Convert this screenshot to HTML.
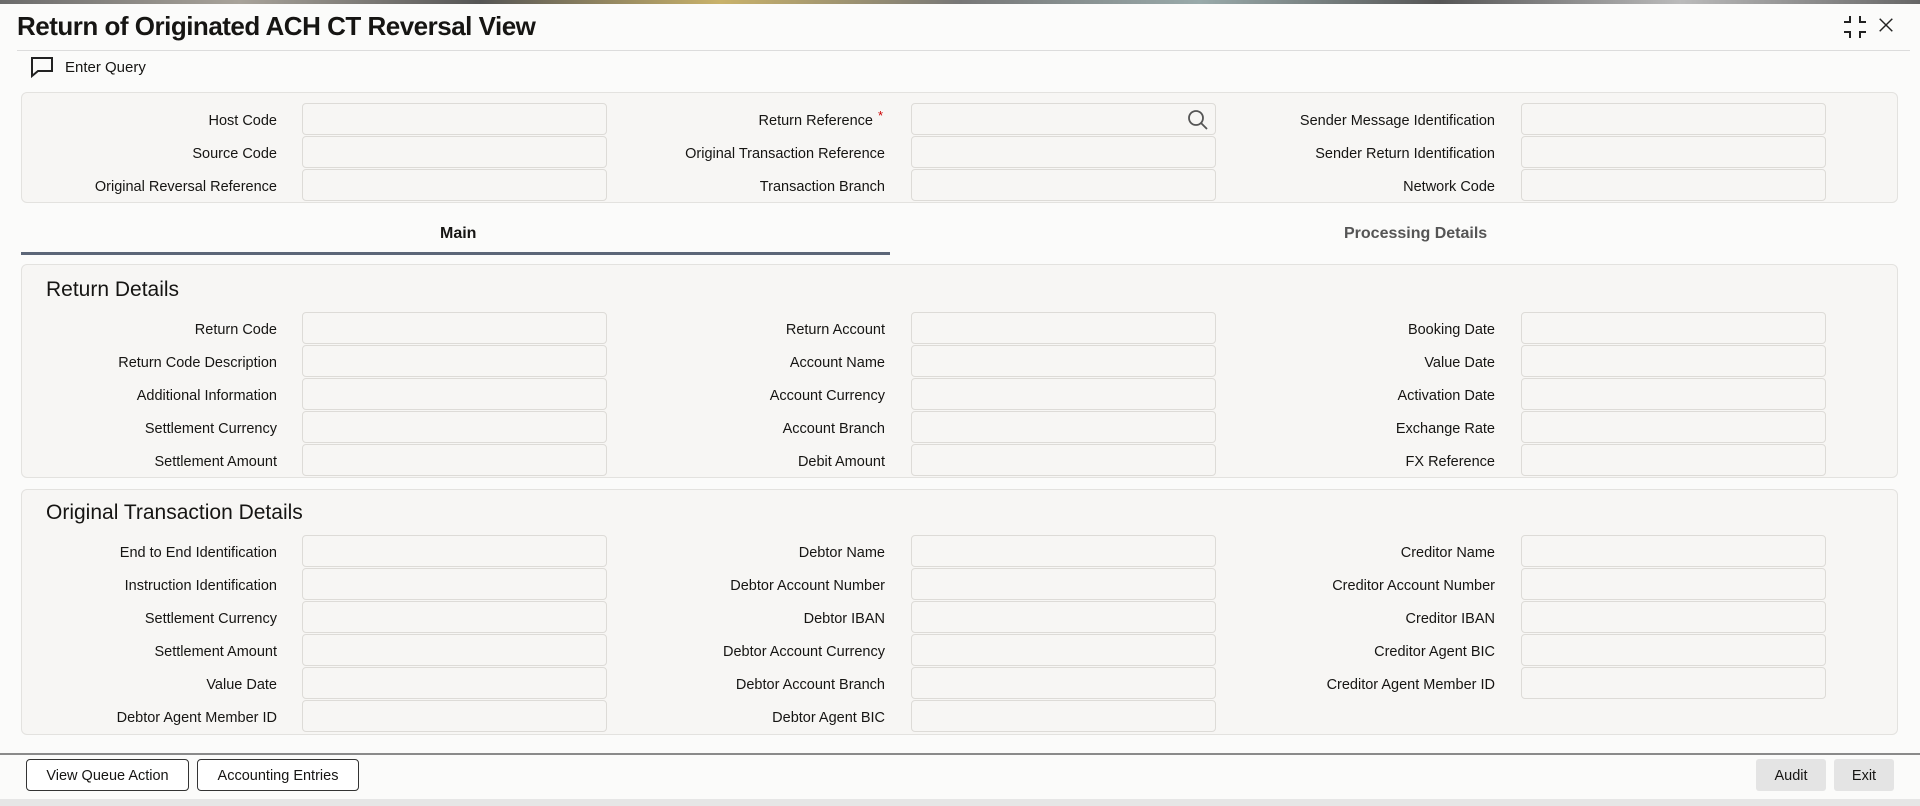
<!DOCTYPE html>
<html><head><meta charset="utf-8"><style>
*{box-sizing:border-box;margin:0;padding:0}
body{width:1920px;height:806px;overflow:hidden;background:#fbfbfa;font-family:"Liberation Sans",sans-serif;color:#161513;position:relative}
.top{position:absolute;left:0;top:0;width:1920px;height:4px;background:linear-gradient(90deg,#6b6b6b,#a8a39a,#555,#c9b26a,#777,#9aa,#555,#bbb,#666)}
.title{position:absolute;left:17px;top:11px;font-size:26px;font-weight:bold;letter-spacing:-0.5px}
.sep{position:absolute;left:17px;top:50px;width:1893px;height:1px;background:#dcdcdc}
.eq{position:absolute;left:65px;top:59px;font-size:15px}
.panel{position:absolute;left:21px;width:1877px;background:#f7f6f4;border:1px solid #e3e2df;border-radius:6px}
.lbl{position:absolute;font-size:14.5px;text-align:right;width:270px;line-height:32px;padding-top:2px}
.inp{position:absolute;width:305px;height:32px;border:1px solid #dddbd7;border-radius:4px;background:#f7f6f4}
.h2{position:absolute;left:46px;font-size:21px}
.tab{position:absolute;top:225px;font-size:16px;font-weight:bold}
.btn{position:absolute;top:759px;height:32px;border:1px solid #333;border-radius:4px;font-size:14.5px;line-height:32px;text-align:center;background:#fff}
.gbtn{position:absolute;top:759px;height:32px;background:#e4e4e4;border-radius:3px;font-size:14.5px;line-height:34px;text-align:center}
</style></head><body>
<div class="top"></div>
<div class="title">Return of Originated ACH CT Reversal View</div>
<svg style="position:absolute;left:1842px;top:14px" width="26" height="26" viewBox="0 0 26 26" fill="none" stroke="#222" stroke-width="2"><path d="M8 2v6H2M18 2v6h6M8 24v-6H2M18 24v-6h6"/></svg>
<svg style="position:absolute;left:1877px;top:16px" width="18" height="18" viewBox="0 0 20 20" stroke="#222" stroke-width="1.6"><path d="M3 3l14 14M17 3L3 17"/></svg>
<div class="sep"></div>
<svg style="position:absolute;left:30px;top:56px" width="24" height="22" viewBox="0 0 24 22" fill="none" stroke="#222" stroke-width="2"><path d="M2 2h20v13H8l-6 5z"/></svg>
<div class="eq">Enter Query</div>

<div class="panel" style="top:92px;height:111px"></div>
<div class="panel" style="top:264px;height:214px"></div>
<div class="panel" style="top:489px;height:246px"></div>

<div class="tab" style="left:440px">Main</div>
<div class="tab" style="left:1344px;color:#555">Processing Details</div>
<div style="position:absolute;left:21px;top:252px;width:869px;height:3px;background:#5c6678"></div>

<div class="h2" style="top:278px">Return Details</div>
<div class="h2" style="top:501px">Original Transaction Details</div>

<div id="f"></div>
<script>
var rows=[
[103,["Host Code","Return Reference","Sender Message Identification"]],
[136,["Source Code","Original Transaction Reference","Sender Return Identification"]],
[169,["Original Reversal Reference","Transaction Branch","Network Code"]],
[312,["Return Code","Return Account","Booking Date"]],
[345,["Return Code Description","Account Name","Value Date"]],
[378,["Additional Information","Account Currency","Activation Date"]],
[411,["Settlement Currency","Account Branch","Exchange Rate"]],
[444,["Settlement Amount","Debit Amount","FX Reference"]],
[535,["End to End Identification","Debtor Name","Creditor Name"]],
[568,["Instruction Identification","Debtor Account Number","Creditor Account Number"]],
[601,["Settlement Currency","Debtor IBAN","Creditor IBAN"]],
[634,["Settlement Amount","Debtor Account Currency","Creditor Agent BIC"]],
[667,["Value Date","Debtor Account Branch","Creditor Agent Member ID"]],
[700,["Debtor Agent Member ID","Debtor Agent BIC",null]]];
var lx=[7,615,1225],ix=[302,911,1521],h="";
rows.forEach(function(r){r[1].forEach(function(t,i){if(t===null)return;
var w=(r[0]==103&&i==1)?'style="width:258px;left:615px;top:'+r[0]+'px"':'style="left:'+lx[i]+'px;top:'+r[0]+'px"';
h+='<div class="lbl" '+w+'>'+t+'</div><div class="inp" style="left:'+ix[i]+'px;top:'+r[0]+'px"></div>';});});
document.getElementById("f").innerHTML=h;
</script>
<div style="position:absolute;left:878px;top:108px;color:#c00;font-size:13px">*</div>
<svg style="position:absolute;left:1186px;top:108px" width="24" height="24" viewBox="0 0 24 24" fill="none" stroke="#555" stroke-width="1.8"><circle cx="10" cy="10" r="7"/><path d="M15 15l6 6"/></svg>

<div style="position:absolute;left:0;top:753px;width:1920px;height:2px;background:#8a8a8a"></div>
<div class="btn" style="left:26px;width:163px">View Queue Action</div>
<div class="btn" style="left:197px;width:162px">Accounting Entries</div>
<div class="gbtn" style="left:1756px;width:70px">Audit</div>
<div class="gbtn" style="left:1834px;width:60px">Exit</div>
<div style="position:absolute;left:0;top:799px;width:1920px;height:7px;background:#e6e6e6"></div>
</body></html>
